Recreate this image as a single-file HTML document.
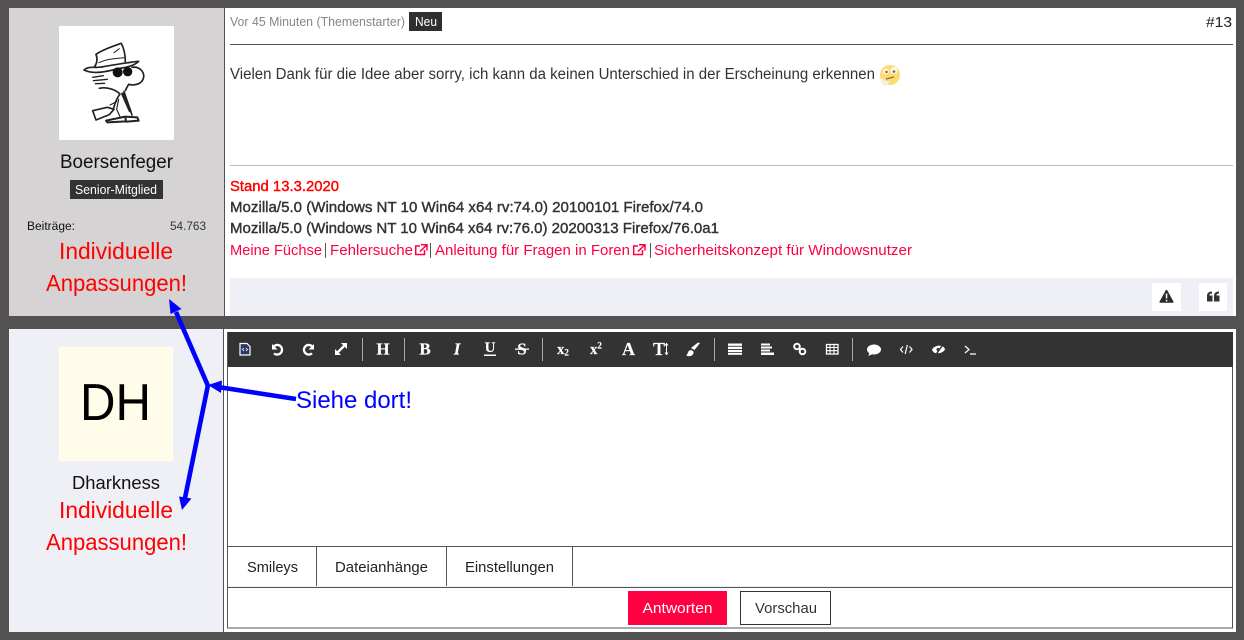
<!DOCTYPE html>
<html><head><meta charset="utf-8"><style>
html,body{margin:0;padding:0;background:#535152;width:1244px;height:640px;overflow:hidden}
svg{display:block}
text{font-family:"Liberation Sans",sans-serif}
.serif{font-family:"Liberation Serif",serif;font-weight:bold;fill:#fff;stroke:#fff;stroke-width:.15;text-anchor:middle}
.f{stroke:none;fill:#fff}
.s{fill:none;stroke:#fff;stroke-width:2.300}
</style></head><body>
<svg xmlns="http://www.w3.org/2000/svg" width="1244" height="640" viewBox="0 0 1244 640">
<rect width="1244" height="640" fill="#535152"/>
<!-- top panel -->
<rect x="9" y="8" width="215" height="308" fill="#d6d3d4"/>
<rect x="225" y="8" width="1011" height="308" fill="#fff"/>
<rect x="59" y="26" width="115" height="114" fill="#fff"/>
<!-- snoopy -->
<g transform="translate(50,20) scale(.3333)" fill="none" stroke="#222" stroke-width="5" stroke-linecap="round" stroke-linejoin="round">
<path d="M138 103C160 88 190 78 214 70C222 85 226 105 226 126"/>
<path d="M138 103C144 118 140 132 132 143"/>
<path d="M102 150C118 136 135 146 160 140C195 134 230 128 266 124C255 136 235 141 215 144C180 152 135 166 102 150Z" fill="#fff"/>
<path d="M192 98L208 86M146 128C172 116 195 116 224 113" stroke-width="3"/>
<path d="M246 142C268 138 283 155 281 172C277 192 255 198 236 193C232 200 228 207 226 212"/>
<path d="M128 172L160 167M130 182L172 178M136 191L164 190" stroke-width="4"/>
<path d="M148 205C170 200 196 208 210 222C196 240 194 255 190 268"/>
<path d="M222 215L246 285"/>
<path d="M218 222L240 272" stroke-width="9"/>
<path d="M172 262L128 272L138 300L178 284L192 268Z" fill="#fff"/>
<path d="M206 238L200 268L210 290M180 255L200 245" stroke-width="3.500"/>
<path d="M168 302L226 290L228 304L172 307ZM226 290L262 292L266 302L228 305Z" fill="#fff" stroke-width="6"/>
<circle cx="203" cy="157" r="15" fill="#111" stroke="none"/>
<circle cx="233" cy="155" r="14" fill="#111" stroke="none"/>
</g>
<text x="60" y="168" font-size="19.500" fill="#111" textLength="113" lengthAdjust="spacingAndGlyphs">Boersenfeger</text>
<rect x="70" y="180" width="93" height="19" fill="#333"/>
<text x="75" y="194" font-size="13" fill="#fff" textLength="82" lengthAdjust="spacingAndGlyphs">Senior-Mitglied</text>
<text x="27" y="230" font-size="12.300" fill="#111" textLength="48" lengthAdjust="spacingAndGlyphs">Beiträge:</text>
<text x="170" y="230" font-size="12.300" fill="#333" textLength="36" lengthAdjust="spacingAndGlyphs">54.763</text>
<text x="59" y="259" font-size="23.500" fill="#ff0000" textLength="114" lengthAdjust="spacingAndGlyphs">Individuelle</text>
<text x="46" y="291" font-size="23.500" fill="#ff0000" textLength="141" lengthAdjust="spacingAndGlyphs">Anpassungen!</text>
<!-- post -->
<text x="230" y="26" font-size="12.800" fill="#868686" textLength="175" lengthAdjust="spacingAndGlyphs">Vor 45 Minuten (Themenstarter)</text>
<rect x="409" y="12" width="33" height="19" fill="#2f2f2f"/>
<text x="415" y="26" font-size="13" fill="#fff" textLength="22" lengthAdjust="spacingAndGlyphs">Neu</text>
<text x="1206" y="27" font-size="15" fill="#222" textLength="26" lengthAdjust="spacingAndGlyphs">#13</text>
<rect x="230" y="44" width="1003" height="1" fill="#555"/>
<text x="230" y="79" font-size="15.500" fill="#333" textLength="645" lengthAdjust="spacingAndGlyphs">Vielen Dank für die Idee aber sorry, ich kann da keinen Unterschied in der Erscheinung erkennen</text>
<!-- emoji -->
<circle cx="890" cy="75" r="10" fill="#fbdb72"/>
<circle cx="886" cy="71.500" r="3" fill="#fff6d8"/><circle cx="894" cy="70.500" r="3.500" fill="#fff6d8"/>
<circle cx="886.500" cy="72" r="1.200" fill="#665"/><circle cx="894" cy="71.500" r="1.300" fill="#665"/>
<path d="M886 79L894 77" stroke="#9a6b3a" stroke-width="1.300" fill="none"/>
<path d="M882 78C880 80 881 85 885 86C888 85.500 889 82 890 81L886 81Z" fill="#f5f0e0"/>
<rect x="230" y="165" width="1003" height="1" fill="#bbb"/>
<text x="230" y="191" font-size="14.800" fill="#ff0000" stroke="#ff0000" stroke-width=".4" textLength="109" lengthAdjust="spacingAndGlyphs">Stand 13.3.2020</text>
<text x="230" y="212" font-size="14.800" fill="#333" stroke="#333" stroke-width=".4" textLength="473" lengthAdjust="spacingAndGlyphs">Mozilla/5.0 (Windows NT 10 Win64 x64 rv:74.0) 20100101 Firefox/74.0</text>
<text x="230" y="233" font-size="14.800" fill="#333" stroke="#333" stroke-width=".4" textLength="489" lengthAdjust="spacingAndGlyphs">Mozilla/5.0 (Windows NT 10 Win64 x64 rv:76.0) 20200313 Firefox/76.0a1</text>
<g font-size="15" fill="#ff0040">
<text x="230" y="255" textLength="92" lengthAdjust="spacingAndGlyphs">Meine Füchse</text>
<text x="330" y="255" textLength="83" lengthAdjust="spacingAndGlyphs">Fehlersuche</text>
<text x="435" y="255" textLength="195" lengthAdjust="spacingAndGlyphs">Anleitung für Fragen in Foren</text>
<text x="654" y="255" textLength="258" lengthAdjust="spacingAndGlyphs">Sicherheitskonzept für Windowsnutzer</text>
</g>
<g fill="#555"><rect x="325" y="243" width="1" height="15"/><rect x="430" y="243" width="1" height="15"/><rect x="650" y="243" width="1" height="15"/></g>
<g fill="none" stroke="#ff0040" stroke-width="1.500">
<path d="M424.500 250V254.500H415.700V246H420M421 244.700H427V250.500M427 244.700L420 251.500"/>
<path d="M642.500 250V254.500H633.700V246H638M639 244.700H645V250.500M645 244.700L638 251.500"/>
</g>
<rect x="230" y="278" width="1003" height="38" fill="#eff0f6"/>
<rect x="1152" y="283" width="29" height="28" fill="#fff"/>
<rect x="1199" y="283" width="28" height="28" fill="#fff"/>
<path d="M1166.500 290.500L1172.800 302H1160.200Z" fill="#2a2a2a" stroke="#2a2a2a" stroke-width="1.500" stroke-linejoin="round"/>
<rect x="1165.800" y="293.500" width="1.500" height="5" fill="#fff"/><rect x="1165.800" y="299.800" width="1.500" height="1.600" fill="#fff"/>
<g fill="#333"><path d="M1207 296C1207 293 1209 291.500 1212 291.500V293.500C1210.500 293.500 1209.500 294 1209.500 295.500H1212.500V301.500H1207Z"/><path d="M1214 296C1214 293 1216 291.500 1219 291.500V293.500C1217.500 293.500 1216.500 294 1216.500 295.500H1219.500V301.500H1214Z"/></g>

<!-- bottom panel -->
<rect x="9" y="329" width="214" height="303" fill="#eff0f6"/>
<rect x="224" y="329" width="1012" height="303" fill="#fff"/>
<rect x="223" y="329" width="1" height="303" fill="#555"/>
<rect x="59" y="347" width="114" height="114" fill="#fffde9"/>
<text x="80" y="420" font-size="52" fill="#000" textLength="71" lengthAdjust="spacingAndGlyphs">DH</text>
<text x="72" y="489" font-size="18" fill="#111" textLength="88" lengthAdjust="spacingAndGlyphs">Dharkness</text>
<text x="59" y="518" font-size="23.500" fill="#ff0000" textLength="114" lengthAdjust="spacingAndGlyphs">Individuelle</text>
<text x="46" y="550" font-size="23.500" fill="#ff0000" textLength="141" lengthAdjust="spacingAndGlyphs">Anpassungen!</text>
<!-- editor -->
<rect x="227.500" y="332.500" width="1005" height="295.500" fill="#fff" stroke="#555" stroke-width="1"/>
<rect x="228" y="332" width="1005" height="35" fill="#333"/>
<rect x="228" y="546" width="1004" height="1" fill="#555"/>
<rect x="228" y="587" width="1004" height="1" fill="#555"/>
<rect x="228" y="586" width="1004" height="1" fill="#eff0f6"/>
<g fill="#555"><rect x="316" y="547" width="1" height="39"/><rect x="446" y="547" width="1" height="39"/><rect x="572" y="547" width="1" height="39"/></g>
<g font-size="15" fill="#222">
<text x="247" y="572" textLength="51" lengthAdjust="spacingAndGlyphs">Smileys</text>
<text x="335" y="572" textLength="93" lengthAdjust="spacingAndGlyphs">Dateianhänge</text>
<text x="465" y="572" textLength="89" lengthAdjust="spacingAndGlyphs">Einstellungen</text>
</g>
<rect x="628" y="591" width="99" height="34" fill="#ff0040"/>
<text x="642.500" y="613" font-size="15" fill="#fff" textLength="70" lengthAdjust="spacingAndGlyphs">Antworten</text>
<rect x="740.500" y="591.500" width="90" height="33" fill="#fff" stroke="#333"/>
<text x="755" y="613" font-size="15" fill="#333" textLength="62" lengthAdjust="spacingAndGlyphs">Vorschau</text>
<!-- toolbar separators -->
<g fill="#aaa"><rect x="362" y="338" width="1" height="23"/><rect x="404" y="338" width="1" height="23"/><rect x="542" y="338" width="1" height="23"/><rect x="714" y="338" width="1" height="23"/><rect x="852" y="338" width="1" height="23"/></g>
<!-- toolbar icons -->
<path d="M240 343.500H247L250 346.500V355H240Z" fill="#2a3a66" stroke="#fff" stroke-width="1.200"/>
<path d="M244 351L242.500 349.500L244 348M246 351L247.500 349.500L246 348" fill="none" stroke="#fff" stroke-width=".8"/>
<path d="M272 344V349.500H277.500Z" class="f"/>
<path d="M274 346.200A4.800 4.800 0 1 1 274 353.300" class="s"/>
<path d="M314 344V349.500H308.500Z" class="f"/>
<path d="M312 346.200A4.800 4.800 0 1 0 312 353.300" class="s"/>
<path d="M336 354L346 344" class="s"/>
<path d="M341 343H347V349ZM335 349V355H341Z" class="f"/>
<text x="383" y="354.500" font-size="17" class="serif">H</text>
<text x="425" y="354.500" font-size="17" class="serif">B</text>
<text x="457" y="354.500" font-size="17" font-style="italic" class="serif">I</text>
<text x="490" y="352" font-size="15" class="serif">U</text>
<text x="522" y="354.500" font-size="17" class="serif">S</text>
<text x="563" y="354" font-size="14.500" class="serif">x<tspan font-size="9" dy="1.500">2</tspan></text>
<text x="596" y="354" font-size="14.500" class="serif">x<tspan font-size="9" dy="-5.500">2</tspan></text>
<text x="628.500" y="355" font-size="18" class="serif">A</text>
<text x="659" y="355" font-size="18" class="serif">T</text>
<rect x="484" y="354.500" width="12" height="1.500" fill="#fff"/>
<rect x="515" y="348.500" width="14" height="1.300" fill="#fff"/>
<path d="M666.500 344V354M665 345.500L666.500 343.500L668 345.500M665 352.500L666.500 354.500L668 352.500" fill="none" stroke="#fff" stroke-width="1"/>
<path d="M700 343L694.500 350L691 348L698 342.500Z" class="f" stroke="#fff"/>
<path d="M686 355.500C688 355 687.500 350.500 690 350.300C692.500 350 694 351.500 693.500 353C693 356 689 357 686 355.500Z" class="f"/>
<g fill="#fff">
<rect x="728" y="343.500" width="14" height="2.300"/><rect x="728" y="346.700" width="14" height="2.300"/><rect x="728" y="349.900" width="14" height="2.300"/><rect x="728" y="353" width="14" height="1.800"/>
<rect x="761" y="343.500" width="9" height="2"/><rect x="761" y="346.500" width="11" height="2"/><rect x="761" y="349.500" width="9" height="2"/><rect x="761" y="352.500" width="13" height="2.500"/>
</g>
<g fill="none" stroke="#fff" stroke-width="2"><circle cx="797" cy="346.500" r="2.800"/><circle cx="802.500" cy="351.500" r="2.800"/><path d="M798.500 348L801 350"/></g>
<rect x="826.500" y="344.500" width="11.500" height="9.500" fill="none" stroke="#fff" stroke-width="1.300"/>
<path d="M826 347.500H838M826 350.700H838M830 345V354M834 345V354" stroke="#fff" stroke-width="1.100"/>
<ellipse cx="874" cy="349.500" rx="7" ry="5" fill="#fff"/><path d="M869.500 352L868.500 356L873.500 353.500Z" fill="#fff"/>
<path d="M903 346.500L900.500 349.500L903 352.500M909.500 346.500L912 349.500L909.500 352.500M907.300 345L905.200 354" fill="none" stroke="#fff" stroke-width="1.200"/>
<path d="M932 349.500C934 346 939 345 942 346C944 347 945 348.500 945 349.500C943 353 938 354 935 353C933.500 352.500 932.500 351 932 349.500Z" fill="#fff"/>
<path d="M936 354.500L943 344.500" stroke="#333" stroke-width="1.500"/><circle cx="938" cy="349.500" r="1.500" fill="#333"/>
<path d="M965 346L969 349.500L965 353M970 354H976" fill="none" stroke="#fff" stroke-width="1.200"/>
<!-- annotation -->
<text x="296" y="408" font-size="24" fill="#0000ff" textLength="116" lengthAdjust="spacingAndGlyphs">Siehe dort!</text>
<g stroke="#0000ff" stroke-width="4.600" fill="none">
<path d="M296 399L218 387"/><path d="M208.500 387L176 312"/><path d="M208 385L185 498"/>
</g>
<g fill="#0000ff">
<path d="M208 385L222 380.500L221 393Z"/>
<path d="M169 299L181.500 309L170.500 314Z"/>
<path d="M182 510L179 496.500L191.500 498.500Z"/>
</g>
</svg>
</body></html>
